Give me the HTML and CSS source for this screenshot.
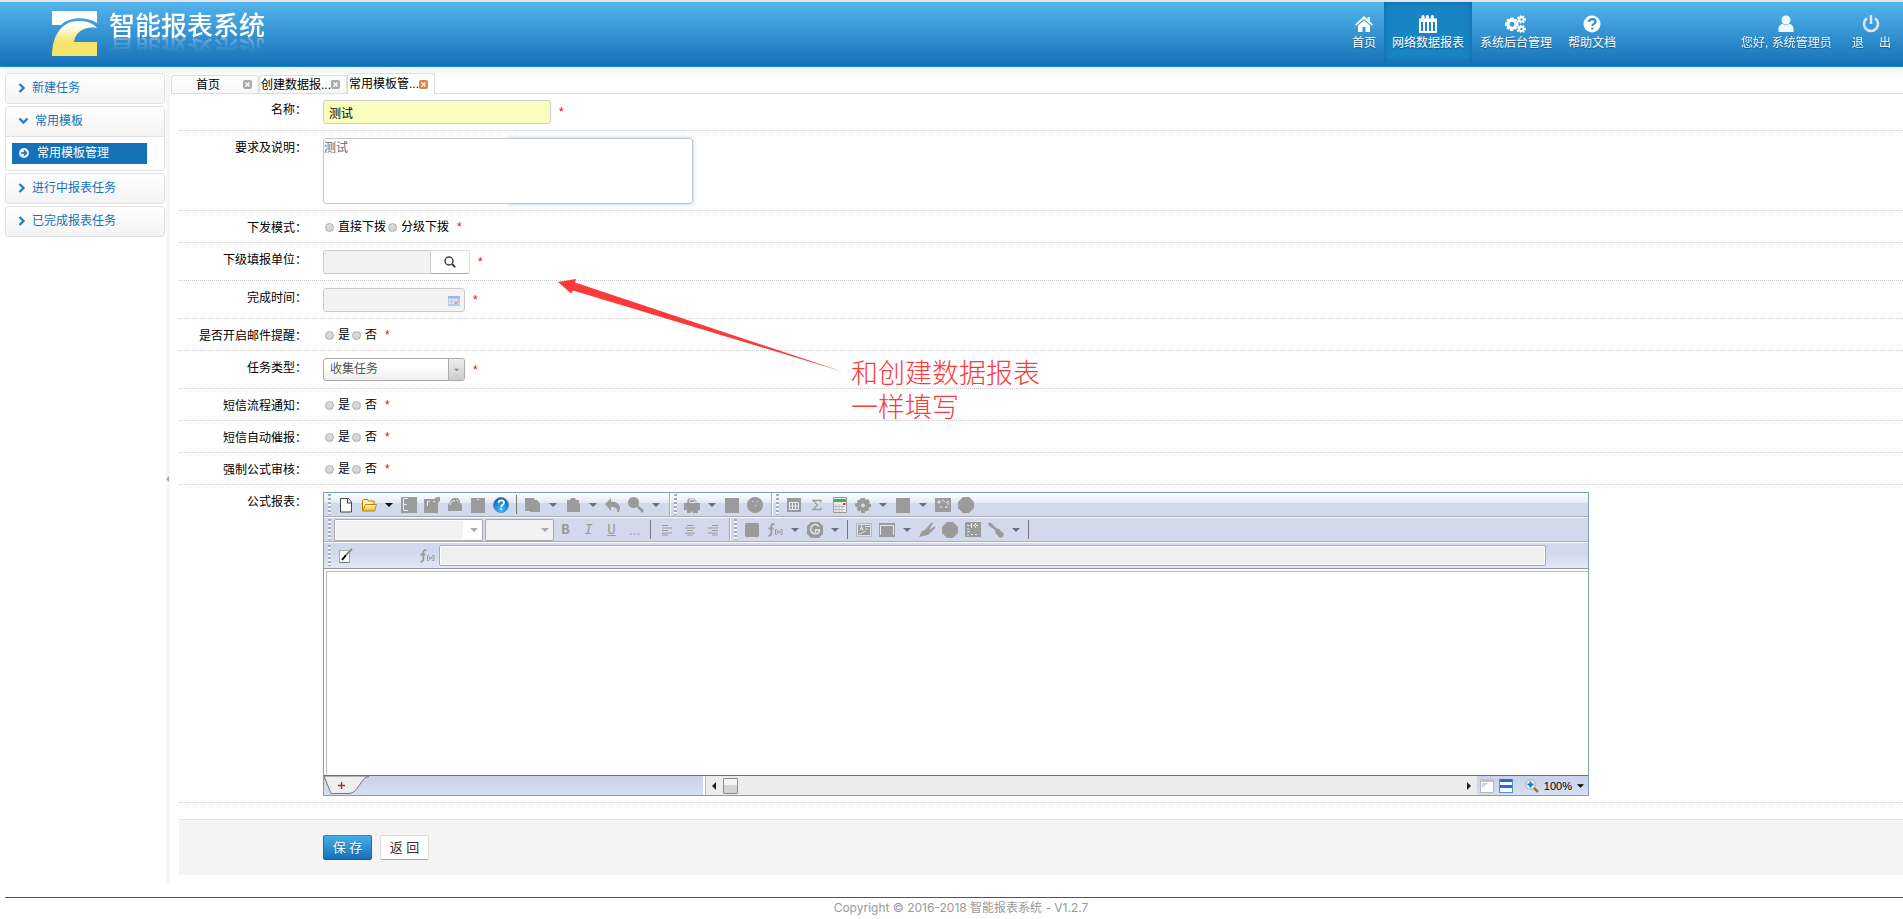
FILE: index.html
```html
<!DOCTYPE html>
<html lang="zh-CN">
<head>
<meta charset="utf-8">
<title>智能报表系统</title>
<link rel="stylesheet" href="styles.css">
</head>
<body>
<svg class="defs" aria-hidden="true">
  <defs>
    <linearGradient id="g-logo" x1="0" y1="0" x2="0" y2="1"><stop offset="0.1" stop-color="#fff"/><stop offset="0.6" stop-color="#f5e36a"/></linearGradient>
    <linearGradient id="g-folder" x1="0" y1="0" x2="0" y2="1"><stop offset="0" stop-color="#fff6b0"/><stop offset="1" stop-color="#e9b93a"/></linearGradient>
    <radialGradient id="g-help" cx="0.5" cy="0.8" r="0.8"><stop offset="0" stop-color="#3cc4ff"/><stop offset="1" stop-color="#0a55b8"/></radialGradient>
  </defs>
  <symbol id="i-dd" viewBox="0 0 8 4"><path d="M0 0h8L4 4z"/></symbol>
  <symbol id="i-new" viewBox="0 0 16 16"><path d="M2.500 1.500h8l3 3.500v10h-11z" fill="#fff" stroke="#444"/><path d="M9.500 1.500v4.500h4" fill="#eee" stroke="#444"/></symbol>
  <symbol id="i-open" viewBox="0 0 16 16"><path d="M1.500 13V3.500l1-1h4l1 1.500h5.500v3" fill="#fff3a8" stroke="#a87800"/><path d="M4.500 7.500h11l-2 6.500h-12z" fill="url(#g-folder)" stroke="#b58a10"/></symbol>
  <symbol id="i-save" viewBox="0 0 16 16"><path d="M0 0h16v16H0z"/><path d="M7 1.500H2.500v12H7M2.500 7.500H6" fill="none" stroke="#e6eaf5"/></symbol>
  <symbol id="i-saveas" viewBox="0 0 16 16"><path d="M0 2h10l3-2h3v4l-2 2v10H0z"/><path d="M3.500 9V4.500H6M9 4.500h2" fill="none" stroke="#e6eaf5"/></symbol>
  <symbol id="i-preview" viewBox="0 0 16 16"><path d="M4 3l2-2h5l2 3v2l2 2v6H1V8z"/><path d="M3.500 8V6l2-2H8M9.500 3l2 1.500" fill="none" stroke="#e6eaf5"/></symbol>
  <symbol id="i-page" viewBox="0 0 16 16"><path d="M1 1h14v15H1z"/><path d="M7 2.500h2" stroke="#e6eaf5"/></symbol>
  <symbol id="i-help" viewBox="0 0 16 16"><circle cx="8" cy="8" r="7.500" fill="url(#g-help)" stroke="#5f8fc4"/><path d="M5.500 6c0-3.500 5.500-3.200 5.500-.3C11 7.700 8.200 7.700 8.200 10M8.200 11.300v1.700" fill="none" stroke="#fff" stroke-width="1.800"/></symbol>
  <symbol id="i-copy" viewBox="0 0 16 16"><path d="M0 1h9l1 2h2l3 3.500V15H5v-1H0z"/></symbol>
  <symbol id="i-paste" viewBox="0 0 16 16"><path d="M2 3h3l1-2h4l1 2h3v3l1 1v8H2z"/></symbol>
  <symbol id="i-undo" viewBox="0 0 16 16"><path d="M0 7l6-6v3.500c6 0 9 3 9 6.500l-1 4h-2c1-3-1-5-6-5v4z"/></symbol>
  <symbol id="i-find" viewBox="0 0 16 16"><circle cx="5.500" cy="5.500" r="5.500"/><path d="M8 9l2-1 6 5.500-2 2.500z"/></symbol>
  <symbol id="i-print" viewBox="0 0 16 16"><path d="M0 6h3l1-4.500h6l2.500 3V6H16v7h-2v3H9l-1-2-2 2H3v-3H0z"/><path d="M5.500 5.500l.5-3h3.500l2 3z" fill="none" stroke="#e6eaf5"/></symbol>
  <symbol id="i-block" viewBox="0 0 16 16"><path d="M1 1h14v15H1z"/></symbol>
  <symbol id="i-round" viewBox="0 0 16 16"><path d="M5 0h6l5 5v6l-5 5H5l-5-5V5z"/></symbol>
  <symbol id="i-soft" viewBox="0 0 16 16"><rect x="1" y="1" width="14" height="14" rx="2"/></symbol>
  <symbol id="i-clock" viewBox="0 0 16 16"><circle cx="8" cy="8" r="8"/><path d="M5 4h1v1H5zM10 4h1v1h-1zM8 8h1v1H8z" fill="#dde2f0"/></symbol>
  <symbol id="i-grid" viewBox="0 0 16 16"><path d="M1 1h14v14H1z"/><path d="M3.500 5.500h9v7h-9zM3.500 9h9M6.500 5.500v7M9.500 5.500v7" fill="none" stroke="#e6eaf5"/></symbol>
  <symbol id="i-sum" viewBox="0 0 16 16"><path d="M12 5.500v-2H4L8.500 8 4 12.500h8v-2" fill="none" stroke="#9b9b9b" stroke-width="1.300"/></symbol>
  <symbol id="i-calc" viewBox="0 0 16 16"><path d="M1.500.5h13v15h-13z" fill="#eee" stroke="#999"/><path d="M2 2h12v3H2z" fill="#2eb85a"/><path d="M4 7v8M7 7v8M10 7v8M2 9.500h11M2 12.500h11" stroke="#bbb"/><path d="M11 6h2.500v2H11z" fill="#e33"/></symbol>
  <symbol id="i-gear" viewBox="0 0 16 16"><path fill-rule="evenodd" d="M6 1h4l.6 2L13 2l2 3-1.500 1.500L16 7v3l-2.400.5L14 13l-3 1.500L10 13v3H6v-3l-2 1.500L1.500 12 2.600 10 0 9.500V6.500L2.500 6 2 3.500l3-1zM8 6.500a2 2 0 1 0 .01 0z"/></symbol>
  <symbol id="i-image" viewBox="0 0 16 16"><path d="M0 1h16v14H0z"/><path d="M3 4h2v2H3zM7 3l3 2M11 6l2-2v4M5 9l2 2M10 10h3" fill="none" stroke="#e6eaf5"/></symbol>
  <symbol id="i-left" viewBox="0 0 16 16"><path d="M3 3.500h6M3 6h10M3 8.500h6M3 11h10M3 13h6" stroke="#9b9b9b"/></symbol>
  <symbol id="i-center" viewBox="0 0 16 16"><path d="M5 3.500h6M3 6h10M5 8.500h6M3 11h10M5 13h6" stroke="#9b9b9b"/></symbol>
  <symbol id="i-right" viewBox="0 0 16 16"><path d="M7 3.500h6M3 6h10M7 8.500h6M3 11h10M7 13h6" stroke="#9b9b9b"/></symbol>
  <symbol id="i-fx" viewBox="0 0 16 16"><path d="M7.500 2.500C5 1.200 4.300 3 4.300 5v6c0 2-.8 3-3 2.500M1.500 6.500h5" fill="none" stroke="#9b9b9b" stroke-width="1.800"/><path d="M10 7.500H8.500v5H10M13.500 7.500H15v5h-1.500M10.500 8.500v3M13 8.500v3M10.500 10H13" fill="none" stroke="#9b9b9b"/></symbol>
  <symbol id="i-g" viewBox="0 0 16 16"><path d="M4 0h8l4 4v8l-4 4H4l-4-4V4z"/><path d="M12 4.500C8-.0 2.500 4 4 9c1.500 4 8.500 4 8.500-1H8.500v2.500" fill="none" stroke="#e6eaf5" stroke-width="1.300"/></symbol>
  <symbol id="i-text" viewBox="0 0 16 16"><path d="M.5 1.500h15v13H.5z"/><path d="M1.500 2.500h13v11h-13zM4 8.500l1.500-5 1.500 5M4.500 7h2M9 4.500h5M9 7h3M3 12l7-3" fill="none" stroke="#e6eaf5" stroke-width=".9"/></symbol>
  <symbol id="i-frame" viewBox="0 0 16 16"><path d="M0 1h16v14H0z"/><path d="M1.500 13V3.500h13V13" fill="none" stroke="#e6eaf5"/></symbol>
  <symbol id="i-chart" viewBox="0 0 16 16"><path d="M0 15L3 9l3-1L13 0l1 1-4 7 6-4v2l-7 7-5 1z"/></symbol>
  <symbol id="i-cells" viewBox="0 0 16 16"><path d="M0 0h16v15H0z"/><path d="M2 3.500h12M6.500 1v5M10.500 1v5M3 6v8M3 9.500h3M6 12.500h3M10 12.500h3" stroke="#e6eaf5" stroke-dasharray="2 1"/></symbol>
  <symbol id="i-brush" viewBox="0 0 16 16"><path d="M0 1h3l5 5 3 1 5 5-1 3-3 1-4-4-1-4-6-4z"/></symbol>
  <symbol id="i-edit" viewBox="0 0 16 16"><path d="M1.500 2.500h10v12h-10z" fill="#fff" stroke="#aaa"/><path d="M1.500 14.500h10" stroke="#777"/><path d="M4 12l4-5" stroke="#000" stroke-width="2"/><path d="M8 7l6-6" stroke="#888" stroke-width="2"/></symbol>
  <symbol id="i-chev" viewBox="0 0 8 10"><path d="M1.500 1l4 4-4 4" fill="none" stroke="#2a7fc0" stroke-width="2.400"/></symbol>
  <symbol id="i-chev-down" viewBox="0 0 10 8"><path d="M1 1.500l4 4 4-4" fill="none" stroke="#2a7fc0" stroke-width="2.400"/></symbol>
  <symbol id="i-x" viewBox="0 0 9 9"><rect x=".5" y=".5" width="8" height="8" rx="1" fill="currentColor" stroke="currentColor"/><path d="M2.500 2.500l4 4M6.500 2.500l-4 4" stroke="#fff" stroke-width="1.400"/></symbol>
</svg>

<header class="header">
  <div class="brand">
    <svg class="logo" viewBox="0 0 45 45" aria-hidden="true">
      <path d="M0 0h45v12C34 5 16 6 9 14H0z" fill="#fff"/>
      <path d="M0 45C0 22 12 9 28 10c9 0 15 4 17 7-12-2-22 4-23 14h23v14z" fill="url(#g-logo)"/>
    </svg>
    <h1 class="title">智能报表系统</h1>
  </div>
  <nav class="nav">
    <a href="#"><svg viewBox="0 0 18 18"><path d="M9 1L0 9.500l1.200 1.200L9 4l7.800 6.700L18 9.500l-3-2.800V2h-2.500v2.300zM9 5.500L3 10.500V17h4.500v-5h3v5H15v-6.500z"/></svg>首页</a>
    <a href="#" class="active"><svg viewBox="0 0 18 18"><path fill-rule="evenodd" d="M0 3.500h2.500V1q1.500-2 3 0v2.500h1.300V1q1.500-2 3 0v2.500h2V1q1.500-2 3 0v2.500H18V18H0zM2 7v9h2V7zm4 0v9h2V7zm4 0v9h2V7zm4 0v9h2V7z"/></svg>网络数据报表</a>
    <a href="#"><svg class="wide" viewBox="0 0 21 18"><path fill-rule="evenodd" d="M5.500 2.500h3l.4 2 1.600-.9 1.600 1.700-1 1.700 2.400.6v3.200l-2.300.5 1 1.700-1.800 1.700-1.700-.9-.4 2.200H5.200l-.4-2.200-1.700.9-1.700-1.700.9-1.700L0 10.800V7.600L2.300 7l-1-1.700L3 3.600l1.800.9zM7 6.700a2.500 2.500 0 1 0 .01 0z"/><path fill-rule="evenodd" d="M15.500 0l1 1.500 2-1 1 1.200-1 1.300 2.500.5v2l-2 .2.800 1.600-1.500.9L17 7l-1 1.500h-1L14.500 7l-2 .7-.9-1.200L13 5l-1-2 1-1.500 1.500.3zM16.400 3.200a1.200 1.200 0 1 0 .01 0zM15.500 9.500l1 1.500 2-1 1 1.200-1 1.300 2.500.5v2l-2 .2.800 1.600-1.500.9-1.300-1.200-1 1.200h-1l-.5-1.500-2 .7-.9-1.200 1.400-1.500-1-2 1-1.500 1.500.3zM16.400 12.700a1.200 1.200 0 1 0 .01 0z"/></svg>系统后台管理</a>
    <a href="#"><svg viewBox="0 0 18 18"><circle cx="9" cy="9" r="8.500"/><path d="M6 7c0-4 6.500-3.600 6.500-.3C12.500 9 9.300 8.700 9.300 11M9.300 12.500v2" fill="none" stroke="#2f8fd0" stroke-width="2.200"/></svg>帮助文档</a>
  </nav>
  <nav class="nav user">
    <a href="#"><svg viewBox="0 0 18 18"><circle cx="9" cy="5" r="4.500"/><path d="M1.500 17v-3c0-4 3-5 4.500-5q3 2 6 0c1.500 0 4.500 1 4.500 5v3z"/></svg>您好, 系统管理员</a>
    <a href="#"><svg viewBox="0 0 18 18"><path d="M5 3.200a7 7 0 1 0 8 0M9 0v9" fill="none" stroke="#e8f3fb" stroke-width="2.500"/></svg>退 &emsp;出</a>
  </nav>
</header>

<div class="body">
  <aside class="side">
    <section class="panel"><a href="#" class="head"><svg class="chev"><use href="#i-chev"/></svg>新建任务</a></section>
    <section class="panel">
      <a href="#" class="head"><svg class="chev-down"><use href="#i-chev-down"/></svg>常用模板</a>
      <div class="sub"><a href="#"><svg viewBox="0 0 10 10"><circle cx="5" cy="5" r="5" fill="#e3effa"/><path d="M2 5h5M5 2.500L7.500 5 5 7.500" fill="none" stroke="#1572b8" stroke-width="1.500"/></svg>常用模板管理</a></div>
    </section>
    <section class="panel"><a href="#" class="head"><svg class="chev"><use href="#i-chev"/></svg>进行中报表任务</a></section>
    <section class="panel"><a href="#" class="head"><svg class="chev"><use href="#i-chev"/></svg>已完成报表任务</a></section>
  </aside>
  <div class="splitter"><svg viewBox="0 0 3 6"><path d="M3 0v6L0 3z"/></svg></div>

  <main class="main">
    <div class="tabs">
      <div class="tab home"><a href="#">首页</a><button aria-label="关闭"><svg><use href="#i-x"/></svg></button></div>
      <div class="tab"><a href="#">创建数据报...</a><button aria-label="关闭"><svg><use href="#i-x"/></svg></button></div>
      <div class="tab current"><a href="#">常用模板管...</a><button aria-label="关闭"><svg><use href="#i-x"/></svg></button></div>
    </div>

    <form class="form">
      <div class="row first"><label class="name" for="f-name">名称：</label><div class="ctl"><input id="f-name" class="box title-box" value="测试"><i>*</i></div></div>
      <div class="row"><label class="name" for="f-desc">要求及说明：</label><div class="ctl"><div class="area"><textarea id="f-desc">测试</textarea></div></div></div>
      <div class="row"><span class="name">下发模式：</span><div class="ctl line"><label><input type="radio" name="mode">直接下拨</label><label><input type="radio" name="mode">分级下拨</label><i>*</i></div></div>
      <div class="row"><label class="name" for="f-unit">下级填报单位：</label><div class="ctl"><input id="f-unit" class="box unit" readonly><button type="button" class="search" aria-label="查找"><svg viewBox="0 0 12 12"><circle cx="5" cy="5" r="4" fill="none" stroke="#444" stroke-width="1.500"/><path d="M8 8l3.200 3.200" stroke="#444" stroke-width="2"/></svg></button><i>*</i></div></div>
      <div class="row"><label class="name" for="f-date">完成时间：</label><div class="ctl"><div class="date"><input id="f-date" readonly><svg viewBox="0 0 12 11"><path d="M0 1h12v10H0z" fill="#b9cdea"/><path d="M0 1h12v2H0z" fill="#a3b8de"/><path d="M1 4h2v2H1zM4 4h2v2H4zM7 4h2v2H7zM1 7h2v2H1zM4 7h2v2H4z" fill="#dfe9f7"/><path d="M7 7h2v2H7z" fill="#ee9a8a"/></svg></div><i>*</i></div></div>
      <div class="row"><span class="name">是否开启邮件提醒：</span><div class="ctl line"><label><input type="radio" name="mail">是</label><label><input type="radio" name="mail">否</label><i>*</i></div></div>
      <div class="row"><label class="name" for="f-type">任务类型：</label><div class="ctl"><div class="pick"><select id="f-type"><option>收集任务</option></select><span><svg><use href="#i-dd"/></svg></span></div><i>*</i></div></div>
      <div class="row"><span class="name">短信流程通知：</span><div class="ctl line"><label><input type="radio" name="sms">是</label><label><input type="radio" name="sms">否</label><i>*</i></div></div>
      <div class="row"><span class="name">短信自动催报：</span><div class="ctl line"><label><input type="radio" name="urge">是</label><label><input type="radio" name="urge">否</label><i>*</i></div></div>
      <div class="row"><span class="name">强制公式审核：</span><div class="ctl line"><label><input type="radio" name="audit">是</label><label><input type="radio" name="audit">否</label><i>*</i></div></div>
      <div class="row">
        <span class="name">公式报表：</span>
        <div class="report">
          <div class="bar top">
            <div class="group">
              <button type="button"><svg><use href="#i-new"/></svg></button><button type="button"><svg><use href="#i-open"/></svg></button><button type="button" class="dd on"><svg><use href="#i-dd"/></svg></button><button type="button"><svg><use href="#i-save"/></svg></button><button type="button"><svg><use href="#i-saveas"/></svg></button><button type="button"><svg><use href="#i-preview"/></svg></button><button type="button"><svg><use href="#i-page"/></svg></button><button type="button"><svg><use href="#i-help"/></svg></button><span class="sep"></span><button type="button"><svg><use href="#i-copy"/></svg></button><button type="button" class="dd"><svg><use href="#i-dd"/></svg></button><button type="button"><svg><use href="#i-paste"/></svg></button><button type="button" class="dd"><svg><use href="#i-dd"/></svg></button><button type="button"><svg><use href="#i-undo"/></svg></button><button type="button"><svg><use href="#i-find"/></svg></button><button type="button" class="dd"><svg><use href="#i-dd"/></svg></button>
            </div>
            <div class="group">
              <button type="button"><svg><use href="#i-print"/></svg></button><button type="button" class="dd"><svg><use href="#i-dd"/></svg></button><button type="button"><svg><use href="#i-block"/></svg></button><button type="button"><svg><use href="#i-clock"/></svg></button>
            </div>
            <div class="group last">
              <button type="button"><svg><use href="#i-grid"/></svg></button><button type="button"><svg><use href="#i-sum"/></svg></button><button type="button"><svg><use href="#i-calc"/></svg></button><button type="button"><svg><use href="#i-gear"/></svg></button><button type="button" class="dd"><svg><use href="#i-dd"/></svg></button><button type="button"><svg><use href="#i-block"/></svg></button><button type="button" class="dd"><svg><use href="#i-dd"/></svg></button><button type="button"><svg><use href="#i-image"/></svg></button><button type="button"><svg><use href="#i-round"/></svg></button>
            </div>
          </div>
          <div class="bar mid">
            <div class="group">
              <div class="combo font"><input aria-label="字体" readonly><svg><use href="#i-dd"/></svg></div>
              <div class="combo size"><input aria-label="字号" readonly><svg><use href="#i-dd"/></svg></div>
              <button type="button" class="fmt"><b>B</b></button><button type="button" class="fmt"><em>I</em></button><button type="button" class="fmt"><u>U</u></button><button type="button" class="fmt more">...</button><span class="sep"></span><button type="button"><svg><use href="#i-left"/></svg></button><button type="button"><svg><use href="#i-center"/></svg></button><button type="button"><svg><use href="#i-right"/></svg></button>
            </div>
            <div class="group last">
              <button type="button"><svg><use href="#i-soft"/></svg></button><button type="button"><svg><use href="#i-fx"/></svg></button><button type="button" class="dd"><svg><use href="#i-dd"/></svg></button><button type="button"><svg><use href="#i-g"/></svg></button><button type="button" class="dd"><svg><use href="#i-dd"/></svg></button><span class="sep"></span><button type="button"><svg><use href="#i-text"/></svg></button><button type="button"><svg><use href="#i-frame"/></svg></button><button type="button" class="dd"><svg><use href="#i-dd"/></svg></button><button type="button"><svg><use href="#i-chart"/></svg></button><button type="button"><svg><use href="#i-round"/></svg></button><button type="button"><svg><use href="#i-cells"/></svg></button><button type="button"><svg><use href="#i-brush"/></svg></button><button type="button" class="dd"><svg><use href="#i-dd"/></svg></button><span class="sep"></span>
            </div>
          </div>
          <div class="bar formula">
            <div class="group last"><button type="button"><svg><use href="#i-edit"/></svg></button></div>
            <svg class="fx"><use href="#i-fx"/></svg>
            <input aria-label="公式" readonly>
          </div>
          <div class="sheet"></div>
          <div class="status">
            <div class="sheets"><button type="button" aria-label="新建工作表"><svg viewBox="0 0 48 18"><path d="M0 0l7 17.500h18c9 0 11-15 20-17.500z" fill="#efefef" stroke="#777"/><path d="M14 9.500h7M17.500 6v7" stroke="#8d3a3a" stroke-width="1.400"/></svg></button></div>
            <div class="scroll"><svg viewBox="0 0 4 8"><path d="M4 0v8L0 4z"/></svg><span class="thumb"></span><svg class="end" viewBox="0 0 4 8"><path d="M0 0v8l4-4z"/></svg></div>
            <div class="zoom">
              <svg width="14" height="14" viewBox="0 0 14 14"><path d="M.5.5h13v13H.5z" fill="#fff" stroke="#b5b5b5"/><path d="M0 0h14v3H0z" fill="#c2c2c2"/><path d="M2 4h6L2 9z" fill="#c3d0ea"/></svg>
              <svg width="14" height="14" viewBox="0 0 14 14"><path d="M0 0h14v14H0z" fill="#fff"/><path d="M0 0h14v3H0zM0 6h14v3H0z" fill="#1b6fe0"/><path d="M0 13.500h14M.5 0v14M13.500 0v14" stroke="#5a8ad0"/></svg>
              <svg class="lens" width="14" height="14" viewBox="0 0 14 14"><path d="M8 8l5 5" stroke="#a8713a" stroke-width="2.500"/><circle cx="5.500" cy="5.500" r="4.800" fill="#eef6ff" stroke="#9aa"/><path d="M5.500 2.500v6M2.500 5.500h6" stroke="#1470c8" stroke-width="2"/></svg>
              <span>100%</span><svg width="7" height="4"><use href="#i-dd"/></svg>
            </div>
          </div>
        </div>
      </div>
      <div class="actions"><button type="submit" class="primary">保 存</button><button type="button">返 回</button></div>

      <div class="note">
        <svg viewBox="0 0 286 95" width="286" height="95" aria-hidden="true"><path d="M0 4L18 1l-1 3.500L286 94 15 12.500 13 15.500z"/></svg>
        <p>和创建数据报表一样填写</p>
      </div>
    </form>
  </main>
</div>
<footer class="footer">Copyright © 2016-2018 智能报表系统 - V1.2.7</footer>
</body>
</html>
```
FILE: styles.css
```css
* { box-sizing: border-box; }
body {
  margin: 0;
  font: 12px/18px "Liberation Sans", "Noto Sans CJK SC", sans-serif;
  color: #000;
  background: #fff;
}
a { color: inherit; text-decoration: none; }
button, input, select, textarea { font: inherit; color: inherit; margin: 0; padding: 0; border: 0; background: none; }
svg { display: block; }
.defs { position: absolute; width: 0; height: 0; }

.header {
  display: flex;
  height: 67px;
  border-top: 2px solid #e4e6e8;
  border-bottom: 1px solid #1488d4;
  background: linear-gradient(#54b4ed, #1571b7);
  box-shadow: 0 1px 8px rgba(0, 0, 0, .12);
}
.brand { display: flex; flex: 1; padding: 9px 0 0 52px; gap: 12px; }
.logo { width: 45px; height: 45px; }
.title {
  margin: 0;
  height: 29px;
  font-size: 26px;
  line-height: 30px;
  font-weight: 500;
  color: #fff;
  -webkit-box-reflect: below -5px linear-gradient(transparent 40%, rgba(255, 255, 255, .35));
}
.nav { display: flex; height: 60px; color: #fff; }
.nav a {
  display: flex;
  flex-direction: column;
  align-items: center;
  gap: 1px;
  padding: 13px 8px 0;
  text-shadow: 0 1px 1px rgba(0, 0, 0, .35);
  white-space: pre;
}
.nav svg { width: 18px; height: 18px; fill: #fff; }
.nav svg.wide { width: 21px; }
.nav .active { background: #1784c4; box-shadow: inset 0 0 6px rgba(0, 60, 110, .4); }
.user { gap: 4px; padding: 0 4px 0 109px; }
.user a { opacity: .92; }

.body { display: flex; padding: 6px 0 0 5px; }
.side { width: 160px; display: flex; flex-direction: column; gap: 2px; }
.panel { border: 1px solid #e2e2e2; border-radius: 3px; overflow: hidden; }
.head {
  display: flex;
  align-items: center;
  gap: 6px;
  height: 29px;
  padding: 0 0 2px 12px;
  color: #1572b8;
  background: linear-gradient(#fff, #f3f3f3);
}
.chev { width: 8px; height: 10px; }
.chev-down { width: 11px; height: 8px; }
.sub { padding: 6px 17px 6px 6px; border-top: 1px solid #e2e2e2; }
.sub a { display: flex; align-items: center; gap: 8px; height: 21px; padding: 0 0 2px 7px; color: #fff; background: #1572b8; }
.sub svg { width: 10px; height: 10px; }
.splitter { display: flex; align-items: center; width: 4px; margin: 0 1px; background: #f6f6f6; }
.splitter svg { width: 3px; height: 6px; fill: #aaa; }

.main { flex: 1; min-width: 0; padding-bottom: 10px; }
.tabs { display: flex; align-items: flex-end; height: 21px; border-bottom: 1px solid #ddd; }
.tab {
  display: flex;
  align-items: center;
  width: 88px;
  height: 18px;
  padding-left: 1px;
  border: 1px solid #ddd;
  border-bottom: 0;
  border-radius: 3px 3px 0 0;
  background: linear-gradient(#fff, #f7f7f7);
}
.tab a { width: 70px; white-space: nowrap; }
.tab button { color: #aaa; }
.tab svg { width: 9px; height: 9px; }
.home a { padding-left: 23px; }
.tab.current { height: 21px; margin-bottom: -1px; background: #fff; }
.current button { color: #db8450; }

.form { position: relative; margin-left: 8px; }
.row { display: flex; gap: 16px; padding: 7px 0 6px; border-bottom: 1px dotted #ccc; }
.row.first { padding-top: 6px; }
.name { width: 128px; flex: none; margin-bottom: -1px; padding-top: 1px; text-align: right; }
.ctl { display: flex; }
.ctl i { margin-left: 8px; line-height: 24px; font-style: normal; color: #f00; }
.ctl.line i { line-height: 18px; }
.line label { display: flex; align-items: center; }
input[type="radio"] {
  appearance: none;
  width: 9px;
  height: 9px;
  margin: 0 4px 0 2px;
  border: 1px solid #aaa;
  border-radius: 50%;
  background: linear-gradient(#ddd, #d2d2d2);
}
.box, .date { height: 24px; border: 1px solid #ccc; border-radius: 3px; background: #f2f2f2; }
.title-box { width: 228px; padding: 0 5px; background: #faffbd; }
.unit { width: 108px; border-radius: 3px 0 0 3px; }
.search { width: 39px; height: 24px; padding-left: 13px; border: 1px solid #ddd; border-left: 0; border-bottom-color: #aaa; border-radius: 0 3px 3px 0; background: #fff; }
.search svg { width: 12px; height: 12px; }
.area { position: relative; width: 370px; height: 66px; }
.area::before { content: ""; position: absolute; inset: 0 0 0 50%; box-shadow: 0 0 4px rgba(102, 175, 233, .6); }
.area textarea { position: relative; display: block; width: 100%; height: 100%; resize: none; border: 1px solid #c6c6c6; border-radius: 3px; background: #fff; color: #666; }
.date { display: flex; align-items: center; width: 142px; padding-right: 4px; }
.date input { flex: 1; min-width: 0; }
.date svg { width: 12px; height: 11px; }
.pick { display: flex; width: 142px; height: 23px; margin-bottom: 1px; border: 1px solid #aaa; border-radius: 3px; background: linear-gradient(#fff 40%, #eee); overflow: hidden; }
.pick select { appearance: none; flex: 1; padding: 0 0 2px 6px; color: #555; }
.pick span { display: grid; place-items: center; width: 16px; border-left: 1px solid #aaa; background: linear-gradient(#eee, #ccc); }
.pick svg { width: 5px; height: 4px; fill: #888; }

.report { flex: 0 1 1266px; height: 304px; display: flex; flex-direction: column; border: 1px solid #7b9ebd; }
.bar { display: flex; flex: none; height: 25px; border-bottom: 1px solid #fff; background: #d3d9ec; }
.bar.top { background: linear-gradient(#fff, #e3e9f4 10px, #d3d9ec 10px); }
.group { display: flex; align-items: center; padding-right: 5px; border-right: 1px solid #aaa; border-bottom: 1px solid #a9acb6; box-shadow: 1px 0 #fff; }
.group::before { content: ""; flex: none; width: 3px; height: 21px; margin: 0 3px 0 4px; background: repeating-linear-gradient(#a5acbe 0 2px, #f4f6fb 2px 4px); }
.group.last { flex: 1; border-right: 0; box-shadow: none; }
.bar button { flex: none; display: grid; place-items: center; width: 23px; height: 22px; }
.bar button svg, .fx { width: 16px; height: 16px; fill: #9b9b9b; }
.bar .dd { width: 17px; }
.bar .dd svg { width: 8px; height: 4px; fill: #6c6c74; }
.bar .on svg { fill: #111; }
.sep { width: 5px; height: 19px; flex: none; border-left: 1px solid #777; margin-left: 4px; }
.combo { display: flex; align-items: center; height: 22px; margin-right: 2px; padding: 1px 4px 1px 1px; border: 1px solid #aaa; border-radius: 2px; background: #fff; }
.combo input { flex: 1; min-width: 0; height: 18px; background: #f2f2f2; }
.combo svg { width: 8px; height: 4px; margin-left: 7px; fill: #aaa; }
.combo.font { width: 149px; }
.combo.size { width: 69px; margin-right: 0; background: #f2f2f2; }
.bar .fmt { font: 14px/20px "Liberation Mono", monospace; color: #999; }
.bar .more { font-family: "Liberation Sans", sans-serif; }
.formula { align-items: center; height: 26px; padding-right: 42px; border-bottom: 1px solid #9496a5; background: linear-gradient(#d3d9ec 40%, #e3e8f6); }
.formula .group.last { flex: 0 0 95px; padding: 0; border: 0; }
.formula input { flex: 1; height: 21px; margin-left: 4px; border: 1px solid #aaa; border-radius: 2px; background: #efefef; box-shadow: inset 0 0 0 1px #fff; }
.sheet { flex: 1; margin: 2px 0 0 2px; border-top: 1px solid #bbb; border-left: 1px solid #bbb; background: #fff; }
.status { display: flex; flex: none; height: 20px; border-top: 1px solid #6e6e6e; background: linear-gradient(#c8d2e8, #d6e0f4); }
.sheets { flex: 0 0 381px; border-right: 2px solid #fff; }
.sheets svg { width: 48px; height: 18px; }
.scroll { display: flex; flex: 1; align-items: center; padding: 0 6px; border-left: 1px solid #bbb; background: #ececec; }
.scroll svg { width: 4px; height: 8px; fill: #222; }
.scroll .end { margin-left: auto; }
.thumb { width: 15px; height: 16px; margin-left: 7px; border: 1px solid #888; border-radius: 1px; background: linear-gradient(#f4f4f4 45%, #d4d4d8 45%); }
.zoom { display: flex; align-items: center; gap: 5px; padding: 0 4px 0 3px; font-size: 11px; }
.lens { margin-left: 7px; }

.actions { display: flex; gap: 8px; margin-top: 16px; padding: 15px 0 15px 144px; border-top: 1px solid #e5e5e5; background: #f4f4f4; }
.actions button { width: 49px; height: 25px; font-size: 13px; border: 1px solid #ddd; border-bottom-color: #aaa; border-radius: 2px; background: #fff; color: #333; }
.actions .primary { border-color: #2a8ac8 #1a6dac #135f9c; background: linear-gradient(#45aee9, #1571b7); color: #fff; text-shadow: 0 1px 1px rgba(0, 0, 0, .3); }

.note { position: absolute; left: 379px; top: 184px; display: flex; align-items: flex-start; gap: 7px; color: #fb3a3a; pointer-events: none; }
.note svg { flex: none; fill: #fb3a3a; }
.note p { width: 200px; margin: 77px 0 0; font: 300 27px/34px "Noto Sans CJK SC", sans-serif; }

.footer { margin: 12px 0 0 5px; padding: 1px 0 0 14px; border-top: 1px solid #1a649c; text-align: center; color: #999; font-family: Inter, "Noto Sans CJK SC", sans-serif; }
```
